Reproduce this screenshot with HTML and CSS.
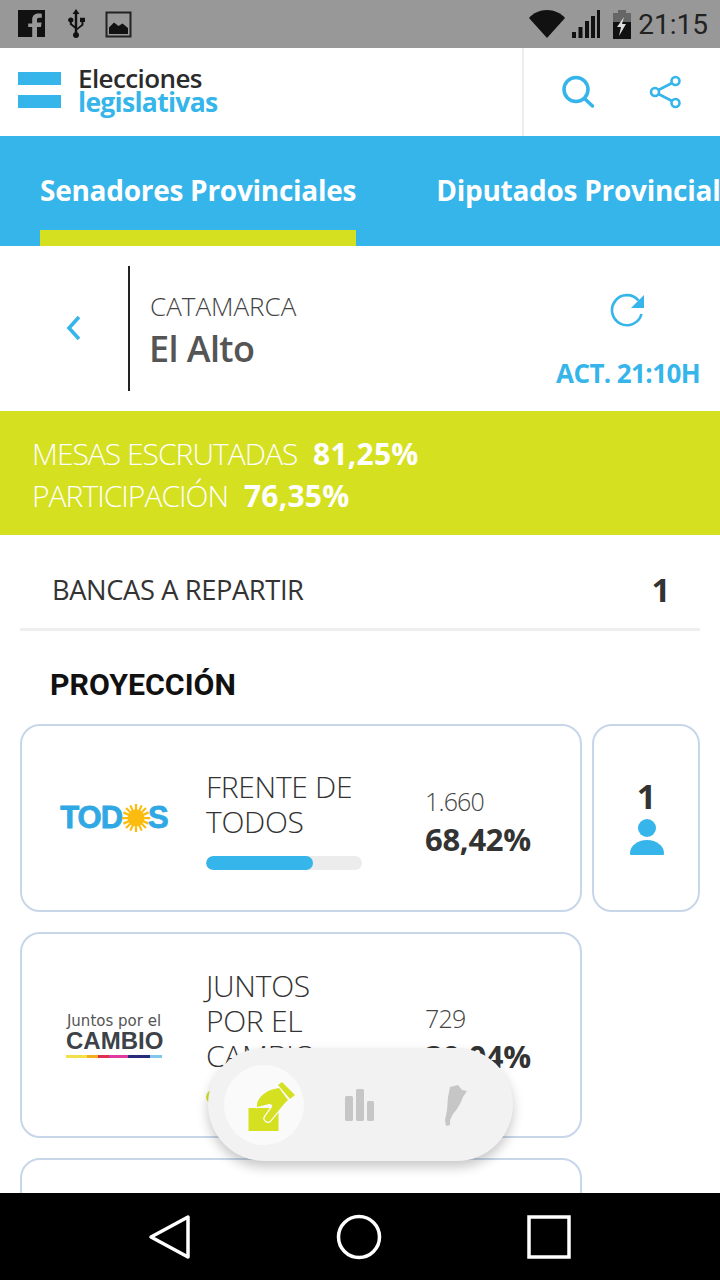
FILE: index.html
```html
<!DOCTYPE html>
<html lang="es">
<head>
  <meta charset="UTF-8">
  <meta name="viewport" content="width=device-width, initial-scale=1.0">
  <title>Elecciones legislativas</title>
  <link rel="stylesheet" href="styles.css">
</head>
<body>

<div class="phone">
  <div class="statusbar">
    <div class="status-left">
      <svg width="30" height="28" viewBox="0 0 30 28"><path fill="#111" d="M1 0h27v27H20V17h4l.6-4.600H20V10c0-1.400.4-2.200 2.300-2.200h2.500V3.700c-.5 0-1.900-.2-3.600-.2-3.600 0-6 2.200-6 6.100v3.800h-4V17h4v10H1z"/></svg>
      <svg width="22" height="30" viewBox="0 0 22 30"><path fill="#111" d="M11 0l3.500 5H12.200v14l4.300-3.600V13H15V8.800h5V13h-1.600v3.300L12.200 21v2.300a3 3 0 1 1-2.400 0V19.400L4.800 15.400v-1.800a2.700 2.700 0 1 1 2 0v.9l3 2.400V5H7.500z"/></svg>
      <svg width="27" height="27" viewBox="0 0 27 27"><path fill="none" stroke="#222" stroke-width="2" d="M1.500 1.500h24v24h-24z"/><path fill="#111" d="M4 23v-6.500l5-5 4.500 3.500 4-2.500 5.500 4.500V23z"/></svg>
    </div>
    <div class="status-right">
      <svg width="36" height="28" viewBox="0 0 36 28"><path fill="#111" d="M0 8C4 3 11 0 18 0s14 3 18 8L18 28z"/></svg>
      <svg width="28" height="29" viewBox="0 0 28 29"><path fill="#111" d="M0 22h4v6H0zM6.500 17h4v11h-4zM13 11h4v17h-4zM19 6h4v22h-4zM25 0h3v28h-3z"/></svg>
      <svg class="battery" width="18" height="29" viewBox="0 0 18 29"><path fill="#666" d="M5 0h8v3h5v26H0V3h5z"/><path fill="#111" d="M0 12h18v17H0z"/><path fill="#ddd" d="M11 7L4 17h4l-2 9 7-12H9z"/></svg>
      <span class="clock">21:15</span>
    </div>
  </div>

  <header class="topbar">
    <div class="brand">
      <div class="flag"><span></span><span></span></div>
      <div class="wordmark">
        <div class="word-top">Elecciones</div>
        <div class="word-bottom">legislativas</div>
      </div>
    </div>
    <div class="top-actions">
      <svg width="36" height="36" viewBox="0 0 36 36"><circle cx="16" cy="15.500" r="12" fill="none" stroke="#36b5ea" stroke-width="3.500"/><path d="M25 25l7.500 7" stroke="#36b5ea" stroke-width="3.500" stroke-linecap="round"/></svg>
      <svg width="34" height="34" viewBox="0 0 34 34"><g fill="none" stroke="#36b5ea" stroke-width="2.600"><circle cx="26.500" cy="6" r="4"/><circle cx="6" cy="17" r="4"/><circle cx="26.500" cy="28" r="4"/><path d="M9.500 15l13.500-7M9.500 19l13.500 7"/></g></svg>
    </div>
  </header>

  <nav class="tabs">
    <div class="tab active">Senadores Provinciales</div>
    <div class="tab">Diputados Provinciales</div>
  </nav>

  <main class="content">
    <section class="place">
      <div class="back">
        <svg width="18" height="28" viewBox="0 0 18 28"><path d="M14 3L4 14l10 11" fill="none" stroke="#36b5ea" stroke-width="3.600"/></svg>
      </div>
      <div class="place-name">
        <div class="province">CATAMARCA</div>
        <div class="town">El Alto</div>
      </div>
      <div class="refresh">
        <svg width="38" height="38" viewBox="0 0 38 38"><path d="M31.500 22a15 15 0 1 1-3-13.500" fill="none" stroke="#36b5ea" stroke-width="2.600"/><path d="M34 3v13H21z" fill="#36b5ea"/></svg>
        <div class="updated">ACT. 21:10H</div>
      </div>
    </section>

    <section class="stats">
      <div class="stat">MESAS ESCRUTADAS <b>81,25%</b></div>
      <div class="stat">PARTICIPACIÓN <b>76,35%</b></div>
    </section>

    <section class="seats">
      <span>BANCAS A REPARTIR</span>
      <b>1</b>
    </section>

    <h2 class="section-title">PROYECCIÓN</h2>

    <div class="results">
      <div class="row">
        <div class="card">
          <div class="logo">
            <div class="logo-todos">TOD<svg width="32" height="32" viewBox="0 0 32 32"><g stroke="#fcbc0f" stroke-width="2.400"><path d="M16 1v30M1 16h30M5.400 5.400l21.200 21.200M26.600 5.400L5.400 26.600M10 2.500l12 27M22 2.500l-12 27M2.500 10l27 12M29.500 10l-27 12"/></g><circle cx="16" cy="16" r="9" fill="#fcbc0f"/></svg>S</div>
          </div>
          <div class="party">
            <div class="party-name">FRENTE DE TODOS</div>
            <div class="bar"><div class="bar-fill" style="width:68.42%"></div></div>
          </div>
          <div class="figures">
            <div class="votes">1.660</div>
            <div class="percent">68,42%</div>
          </div>
        </div>
        <div class="seat-card">
          <b>1</b>
          <svg width="34" height="36" viewBox="0 0 34 36"><circle cx="17" cy="9" r="9" fill="#36b5ea"/><path d="M1 36c-1 0-1-1-1-2 0-7 7.500-13 17-13s17 6 17 13c0 1 0 2-1 2z" fill="#36b5ea"/></svg>
        </div>
      </div>

      <div class="row">
        <div class="card card-tall">
          <div class="logo">
            <div class="logo-cambio">
              <div class="cambio-small">Juntos por el</div>
              <div class="cambio-big">CAMBIO</div>
              <div class="cambio-line"></div>
            </div>
          </div>
          <div class="party">
            <div class="party-name">JUNTOS POR EL CAMBIO</div>
            <div class="bar"><div class="bar-fill bar-yellow" style="width:30.04%"></div></div>
          </div>
          <div class="figures">
            <div class="votes">729</div>
            <div class="percent">30,04%</div>
          </div>
        </div>
      </div>

      <div class="row">
        <div class="card card-tall"></div>
      </div>
    </div>

    <div class="fab">
      <div class="fab-item fab-on">
        <svg class="fab-ballot" width="64" height="64" viewBox="0 0 64 64">
          <path fill="#d5e021" d="M8.500 33h30v23h-30z"/>
          <path fill="#d5e021" stroke="#fafafa" stroke-width="2.500" paint-order="stroke" d="M17 32C16 24 25 16 34 14l5-1 9 12-4 4-14 17c-2 2-7-1-5-4l7-10c1-2-1-3-3-3z"/>
          <path fill="#d5e021" d="M38 10l4-3 13 13-5 4z"/>
        </svg>
      </div>
      <div class="fab-item">
        <svg width="30" height="32" viewBox="0 0 30 32"><rect x="0" y="7" width="8" height="25" rx="1.500" fill="#c6c6c6"/><rect x="11" y="0" width="8" height="32" rx="1.500" fill="#c6c6c6"/><rect x="22" y="12" width="7" height="20" rx="1.500" fill="#c6c6c6"/></svg>
      </div>
      <div class="fab-item">
        <svg width="44" height="56" viewBox="0 0 44 56"><path fill="#c6c6c6" d="M15 10l8-2 4 5 5 1-4 6-2 5-4 7-4 5-3 6v5l-4 1-1-6 2-10 1-13z"/></svg>
      </div>
    </div>
  </main>

  <div class="navbar">
    <svg width="44" height="46" viewBox="0 0 44 46"><path d="M40 3v40L3 23z" fill="none" stroke="#fff" stroke-width="3.500" stroke-linejoin="round"/></svg>
    <svg width="46" height="46" viewBox="0 0 46 46"><circle cx="23" cy="23" r="20.500" fill="none" stroke="#fff" stroke-width="3.500"/></svg>
    <svg width="46" height="46" viewBox="0 0 46 46"><rect x="3" y="3" width="40" height="40" fill="none" stroke="#fff" stroke-width="3.500"/></svg>
  </div>
</div>

</body>
</html>
```

FILE: styles.css
```css
* {
  box-sizing: border-box;
}
body {
  margin: 0;
  font-family: "Open Sans", sans-serif;
  background-color: #fff;
  color: #333;
}
.phone {
  width: 720px;
  height: 1280px;
  display: flex;
  flex-direction: column;
  overflow: hidden;
}

/* status bar */
.statusbar {
  height: 48px;
  flex: none;
  background-color: #989898;
  display: flex;
  justify-content: space-between;
  align-items: center;
  padding: 0 12px 0 17px;
}
.status-left {
  display: flex;
  align-items: center;
  gap: 18px;
}
.status-right {
  display: flex;
  align-items: center;
  gap: 7px;
}
.battery {
  margin-left: 6px;
}
.clock {
  font-family: Roboto, sans-serif;
  font-size: 28px;
  color: #222;
}

/* header */
.topbar {
  height: 88px;
  flex: none;
  display: flex;
  justify-content: space-between;
  background-color: #fff;
}
.brand {
  display: flex;
  align-items: center;
  padding-left: 18px;
  gap: 18px;
}
.flag {
  width: 43px;
  display: flex;
  flex-direction: column;
  gap: 10px;
  margin-top: -4px;
}
.flag span {
  height: 13px;
  background-color: #36b5ea;
}
.wordmark {
  margin-top: -5px;
  margin-left: -1px;
  line-height: 24px;
}
.word-top {
  font-size: 26px;
  font-weight: 600;
  letter-spacing: -0.6px;
  color: #2b2b2b;
}
.word-bottom {
  font-size: 26.500px;
  font-weight: 700;
  letter-spacing: -0.7px;
  color: #36b5ea;
}
.top-actions {
  width: 198px;
  border-left: 2px solid #eee;
  display: flex;
  align-items: center;
  padding: 0 37px 0 36px;
  justify-content: space-between;
}

/* tabs */
.tabs {
  height: 110px;
  flex: none;
  background-color: #36b5ea;
  display: flex;
  gap: 80px;
  padding-left: 40px;
  overflow: hidden;
}
.tab {
  flex: none;
  height: 110px;
  padding-top: 34px;
  font-size: 28px;
  line-height: 40px;
  font-weight: 700;
  letter-spacing: -0.27px;
  color: #fff;
  white-space: nowrap;
}
.tab.active {
  border-bottom: 16px solid #d5e021;
}

/* main */
.content {
  flex: 1;
  position: relative;
  overflow: hidden;
  background-color: #fff;
}
.place {
  height: 165px;
  display: flex;
  align-items: center;
}
.back {
  width: 130px;
  height: 125px;
  border-right: 2px solid #222;
  display: flex;
  align-items: center;
  padding-left: 65px;
  margin-top: -1px;
}
.place-name {
  flex: 1;
  padding-left: 20px;
  margin-top: 4px;
}
.province {
  font-size: 26px;
  line-height: 36px;
  font-weight: 300;
  color: #444;
}
.town {
  font-size: 36px;
  line-height: 50px;
  font-weight: 600;
  letter-spacing: -0.6px;
  margin-left: -1px;
  color: #555;
}
.refresh {
  width: 160px;
  margin-right: 20px;
  text-align: right;
  margin-top: 24px;
}
.refresh svg {
  display: block;
  margin: 0 52px 27px auto;
}
.updated {
  font-size: 26px;
  line-height: 32px;
  font-weight: 700;
  letter-spacing: -0.6px;
  color: #36b5ea;
  white-space: nowrap;
}
.stats {
  height: 124px;
  background-color: #d5e021;
  padding: 22px 32px 0;
  color: #fff;
}
.stat {
  font-size: 30px;
  line-height: 42px;
  font-weight: 300;
  letter-spacing: -1px;
}
.stat b {
  font-weight: 700;
  letter-spacing: 0.2px;
  margin-left: 9px;
}
.seats {
  height: 96px;
  margin: 0 20px;
  padding: 16px 30px 0 32px;
  border-bottom: 3px solid #eee;
  display: flex;
  justify-content: space-between;
  align-items: center;
  font-size: 27.300px;
  letter-spacing: -0.4px;
  color: #333;
}
.seats b {
  font-size: 33px;
}
.section-title {
  margin: 0;
  padding: 32px 0 0 50px;
  height: 93px;
  font-family: Roboto, sans-serif;
  font-size: 30.300px;
  line-height: 44px;
  font-weight: 700;
  color: #111;
}
.results {
  padding: 0 20px;
  display: flex;
  flex-direction: column;
  gap: 20px;
}
.row {
  display: flex;
  gap: 10px;
}
.card {
  width: 562px;
  min-height: 188px;
  border: 2px solid #c8d6ea;
  border-radius: 20px;
  display: flex;
  align-items: center;
}
.card-tall {
  min-height: 206px;
}
.logo {
  width: 184px;
  flex: none;
  display: flex;
  justify-content: center;
}
.logo-todos {
  display: flex;
  align-items: center;
  font-family: "Liberation Sans", sans-serif;
  font-size: 31px;
  font-weight: 700;
  letter-spacing: -1px;
  color: #2fa8e4;
  -webkit-text-stroke: 0.8px #2fa8e4;
}
.logo-todos svg {
  margin: 0 -3px 0 -1px;
  width: 30px;
  height: 30px;
}
.logo-cambio {
  text-align: center;
  width: 96px;
}
.cambio-small {
  font-family: "DejaVu Sans", sans-serif;
  font-size: 15px;
  line-height: 18px;
  color: #555;
  white-space: nowrap;
}
.cambio-big {
  font-family: "Liberation Sans", sans-serif;
  font-size: 24px;
  line-height: 22px;
  font-weight: 700;
  color: #3c4248;
}
.cambio-line {
  height: 3px;
  margin-top: 3px;
  background: linear-gradient(90deg, #f4e14a 0 22%, #f0b020 22% 33%, #e0304f 33% 45%, #e03aa0 45% 65%, #2a2a7a 65% 88%, #80c8ea 88%);
}
.party {
  width: 156px;
  flex: none;
  padding-top: 2px;
}
.party-name {
  font-size: 30px;
  line-height: 35px;
  font-weight: 300;
  letter-spacing: -0.3px;
  color: #333;
}
.bar {
  height: 14px;
  margin-top: 17px;
  border-radius: 7px;
  background-color: #ececec;
  overflow: hidden;
}
.bar-fill {
  height: 100%;
  border-radius: 7px;
  background-color: #36b5ea;
}
.bar-yellow {
  background-color: #d5e021;
}
.figures {
  padding-left: 63px;
  padding-top: 6px;
}
.votes {
  font-size: 25px;
  line-height: 36px;
  font-weight: 300;
  letter-spacing: -0.8px;
  color: #444;
}
.percent {
  font-size: 31px;
  line-height: 41px;
  font-weight: 700;
  letter-spacing: -0.3px;
  color: #333;
}
.seat-card {
  width: 108px;
  border: 2px solid #c8d6ea;
  border-radius: 20px;
  display: flex;
  flex-direction: column;
  align-items: center;
  justify-content: center;
  padding: 0 0 9px 1px;
}
.seat-card b {
  font-size: 34px;
  line-height: 46px;
  color: #333;
}

/* floating switcher */
.fab {
  position: absolute;
  left: 208px;
  top: 802px;
  width: 305px;
  height: 113px;
  border-radius: 57px;
  background-color: #f2f2f2;
  box-shadow: 0 6px 12px rgba(0, 0, 0, 0.22);
  display: flex;
  align-items: center;
  padding-left: 16px;
}
.fab-item {
  width: 80px;
  height: 80px;
  flex: none;
  border-radius: 50%;
  display: flex;
  align-items: center;
  justify-content: center;
  margin-right: 16px;
}
.fab-on {
  background-color: #fafafa;
}
.fab-item:last-child {
  margin-right: 0;
  margin-left: 1px;
}
.fab-ballot {
  flex: none;
  margin: 5px 0 0 16px;
}

/* android nav bar */
.navbar {
  height: 87px;
  flex: none;
  background-color: #000;
  display: flex;
  align-items: center;
  justify-content: space-between;
  padding: 0 148px 0 148px;
}
```
